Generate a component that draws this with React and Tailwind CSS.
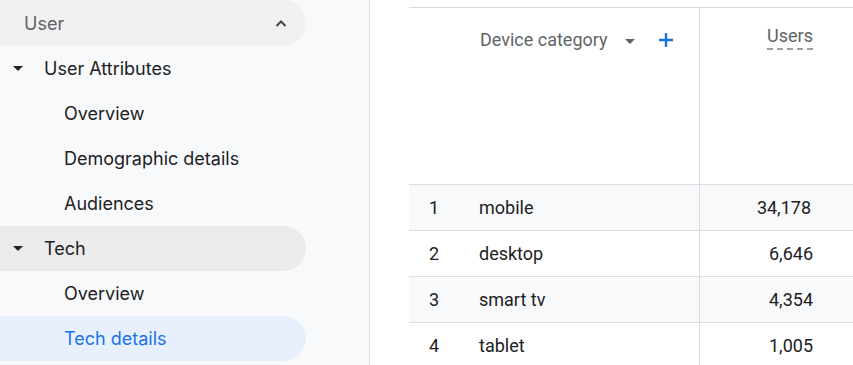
import React from "react";

const Tri = () => (
  <svg width="10" height="5" viewBox="0 0 10 5" className="shrink-0">
    <path d="M0 0 L10 0 L5 5 Z" fill="#202124" />
  </svg>
);

function NavItem({ label, level, active, hover }) {
  return (
    <div
      className={
        "flex items-center h-[45px] w-[306px] rounded-r-full " +
        (active ? "bg-[#e8f0fe] " : hover ? "bg-[#ebebeb] " : "")
      }
    >
      {level === 1 ? (
        <>
          <div className="w-[44px] flex pl-[13px]">
            <Tri />
          </div>
          <span className="text-[18px] text-[#202124]">{label}</span>
        </>
      ) : (
        <span
          className={
            "pl-[64px] text-[18px] " +
            (active ? "text-[#1a73e8]" : "text-[#202124]")
          }
        >
          {label}
        </span>
      )}
    </div>
  );
}

const rows = [
  ["1", "mobile", "34,178", true, "", "pr-[42px]"],
  ["2", "desktop", "6,646", false, "", "pr-[40px]"],
  ["3", "smart tv", "4,354", true, "", "pr-[40px]"],
  ["4", "tablet", "1,005", false, "ml-[2px]", "pr-[40px]"],
];

export default function App() {
  return (
    <div
      className="flex w-[853px] h-[365px] overflow-hidden bg-white"
      style={{ fontFamily: "Inter, 'Open Sans', sans-serif" }}
    >
      <aside className="w-[370px] shrink-0 bg-[#f8f9fa] border-r border-[#dadce0] flex flex-col">
        <div className="flex items-center justify-between h-[46px] w-[306px] rounded-r-full bg-[#f1f1f1] pl-[24px] pr-[19px]">
          <span className="text-[18px] text-[#5f6368]">User</span>
          <svg width="12" height="8" viewBox="0 0 12 8">
            <path d="M1.5 7 L6 2.5 L10.5 7" fill="none" stroke="#444746" strokeWidth="2" />
          </svg>
        </div>
        <NavItem label="User Attributes" level={1} />
        <NavItem label="Overview" level={2} />
        <NavItem label="Demographic details" level={2} />
        <NavItem label="Audiences" level={2} />
        <NavItem label="Tech" level={1} hover />
        <NavItem label="Overview" level={2} />
        <NavItem label="Tech details" level={2} active />
      </aside>
      <main
        className="flex-1 pl-[39px] pt-[7px]"
        style={{ fontFamily: "Roboto, 'Liberation Sans', sans-serif" }}
      >
        <div className="border-t border-[#dadce0]">
          <div className="flex h-[177px] border-b border-[#dadce0]">
            <div className="w-[291px] border-r border-[#dadce0] flex items-start pt-[20px] pl-[71px]">
              <span className="text-[18px] leading-[24px] text-[#5f6368]">Device category</span>
              <svg width="10" height="5" viewBox="0 0 10 5" className="ml-[17px] mt-[11px]">
                <path d="M0 0 L10 0 L5 5 Z" fill="#5f6368" />
              </svg>
              <svg width="16" height="16" viewBox="0 0 16 16" className="ml-[23px] mt-[4px]">
                <path d="M8 1 V15 M1 8 H15" stroke="#1a73e8" strokeWidth="2.4" />
              </svg>
            </div>
            <div className="flex-1 flex justify-end pr-[40px] pt-[17px]">
              <span className="text-[18px] text-[#5f6368] leading-[22px] border-b-2 border-dashed border-[#9aa0a6] h-[25px]">
                Users
              </span>
            </div>
          </div>
          {rows.map(([n, name, v, shade, extra, pr]) => (
            <div
              key={n}
              className={
                "flex h-[46px] border-b border-[#dadce0] text-[18px] text-[#202124] " +
                (shade ? "bg-[#f8f9fa]" : "bg-white")
              }
            >
              <div className="w-[291px] border-r border-[#dadce0] flex items-center">
                <span className="w-[50px] text-center text-[#202124]">{n}</span>
                <span className={"ml-[20px] " + extra}>{name}</span>
              </div>
              <div className={"flex-1 flex items-center justify-end " + pr}>{v}</div>
            </div>
          ))}
        </div>
      </main>
    </div>
  );
}
